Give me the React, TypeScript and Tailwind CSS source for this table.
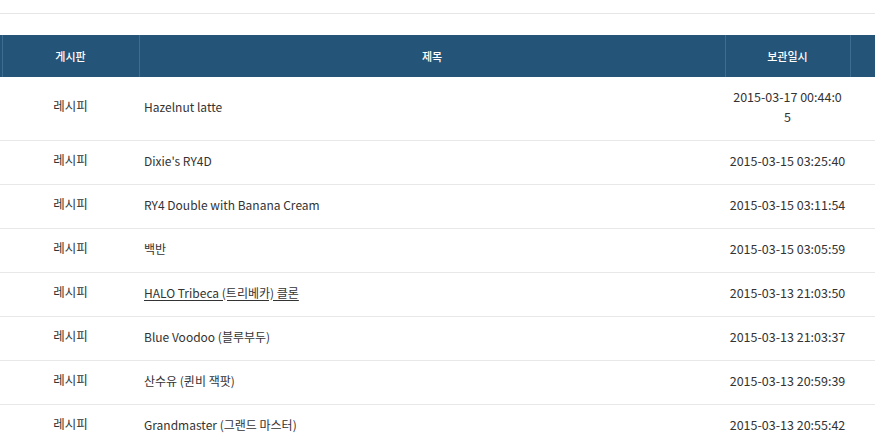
import React from 'react';

const rows = [
  { board: '레시피', title: 'Hazelnut latte', date: ['2015-03-17 00:44:0', '5'] },
  { board: '레시피', title: "Dixie's RY4D", date: ['2015-03-15 03:25:40'] },
  { board: '레시피', title: 'RY4 Double with Banana Cream', date: ['2015-03-15 03:11:54'] },
  { board: '레시피', title: '백반', date: ['2015-03-15 03:05:59'] },
  { board: '레시피', title: 'HALO Tribeca (트리베카) 클론', date: ['2015-03-13 21:03:50'], link: true },
  { board: '레시피', title: 'Blue Voodoo (블루부두)', date: ['2015-03-13 21:03:37'] },
  { board: '레시피', title: '산수유 (퀸비 잭팟)', date: ['2015-03-13 20:59:39'] },
  { board: '레시피', title: 'Grandmaster (그랜드 마스터)', date: ['2015-03-13 20:55:42'] },
];

export default function App() {
  return (
    <div className="w-[875px] h-[448px] overflow-hidden bg-white font-['Noto_Sans_CJK_KR','Noto_Sans',sans-serif] text-[#333333]">
      {/* top divider */}
      <div className="h-[13px]" />
      <div className="h-px bg-[#e6e6e6]" />
      <div className="h-[21px]" />

      <table className="table-fixed border-collapse w-[900px] -ml-px">
        <colgroup>
          <col className="w-[3px]" />
          <col className="w-[137px]" />
          <col className="w-[586px]" />
          <col className="w-[125px]" />
          <col className="w-[49px]" />
        </colgroup>
        <thead>
          <tr className="h-[42px] bg-[#245579] text-white text-[11px]">
            <th className="border-r border-[#3d6d90]" />
            <th className="border-r border-[#3d6d90] font-medium">게시판</th>
            <th className="border-r border-[#3d6d90] font-medium">제목</th>
            <th className="border-r border-[#3d6d90] font-medium">보관일시</th>
            <th />
          </tr>
        </thead>
        <tbody className="text-[12.5px]">
          {rows.map((r, i) => (
            <tr
              key={i}
              className={`border-b border-[#e8e8e8] ${i === 0 ? 'h-[63px]' : 'h-[44px]'}`}
            >
              <td />
              <td className="text-center pb-[3px]">{r.board}</td>
              <td className="pl-[5px] pb-[3px] text-[12px]">
                {r.link ? <span className="underline underline-offset-2">{r.title}</span> : r.title}
              </td>
              <td className="text-center leading-[20px] pb-[3px]">
                {r.date.map((d, j) => (
                  <div key={j}>{d}</div>
                ))}
              </td>
              <td />
            </tr>
          ))}
        </tbody>
      </table>
    </div>
  );
}
